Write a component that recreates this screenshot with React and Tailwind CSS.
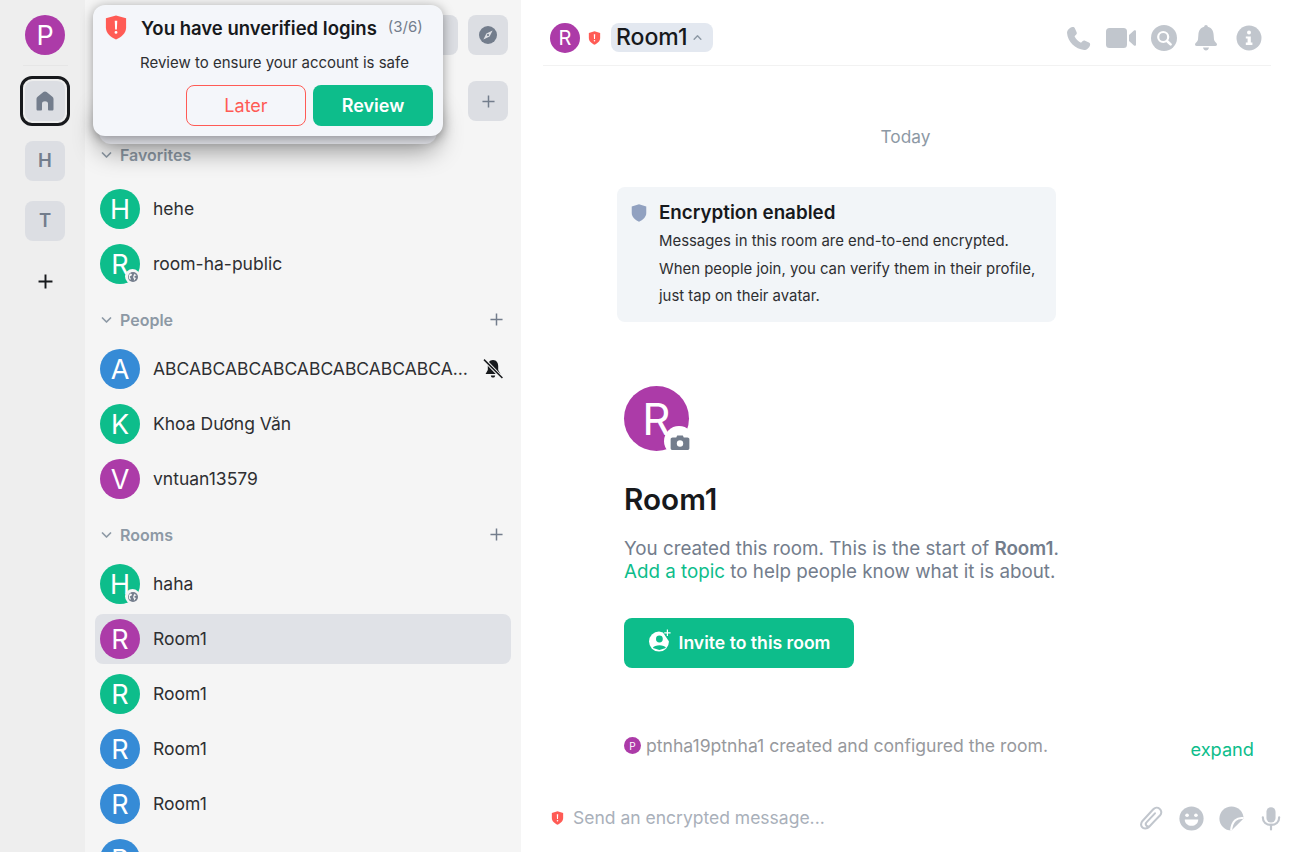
import React from "react";

const PURPLE = "bg-[#ac3ba8]", GREEN = "bg-[#0dbd8b]", BLUE = "bg-[#368bd6]";

function Shield({ className, color = "#ff5b55", mark = true }) {
  return (
    <svg viewBox="0 0 22 26" className={className}>
      <path d="M11 0.5 L21.5 3.5 V13 C21.5 19 16.5 23 11 25.5 C5.5 23 0.5 19 0.5 13 V3.5 Z" fill={color} />
      {mark && <path d="M9.7 6 h2.6 l-.4 9 h-1.8 z M11 16.6 a1.5 1.5 0 1 1 0 3 a1.5 1.5 0 1 1 0-3z" fill="#fff" />}
    </svg>
  );
}

function Chevron({ className = "" }) {
  return (
    <svg viewBox="0 0 10 6" className={className} fill="none" stroke="#8d99a5" strokeWidth="1.7" strokeLinecap="round" strokeLinejoin="round">
      <path d="M1 1 L5 5 L9 1" />
    </svg>
  );
}

function Plus({ className = "", color = "#737d8c", w = 1.6 }) {
  return (
    <svg viewBox="0 0 14 14" className={className} fill="none" stroke={color} strokeWidth={w}>
      <path d="M7 .5 V13.5 M.5 7 H13.5" />
    </svg>
  );
}

function Globe() {
  return (
    <span className="absolute right-0 bottom-0 flex h-[15px] w-[15px] items-center justify-center rounded-full bg-[#f5f5f5] pl-px">
      <svg viewBox="0 0 12 12" className="h-[10px] w-[10px]">
        <circle cx="6" cy="6" r="6" fill="#737d8c" />
        <path d="M2.6 1.8 C4.4 2.2 5.4 3 4.8 3.9 C4 4.6 2.4 4.6 2.2 5.8 C2.2 6.8 3.2 7.2 3.4 8.4 L2.6 9.6 L1 7.6 L1 4 Z M7.6 1.4 C7.4 2.4 8.2 2.8 9 3 L10.4 3.8 C9.4 4.4 8.2 4.6 7.6 5.4 C7.2 6.6 8.6 7 9.6 7.2 C9 8.6 8 9.8 7 10.4 L7.2 8.4 C6.8 7.6 6 7 6.2 6 Z" fill="#f5f5f5" />
      </svg>
    </span>
  );
}

function Avatar({ letter, color, globe }) {
  return (
    <div className={`relative flex h-10 w-10 shrink-0 items-center justify-center rounded-full text-[27px] leading-none text-white ${color}`}>
      {letter}
      {globe && <Globe />}
    </div>
  );
}

function Row({ letter, color, name, globe, selected, muted }) {
  return (
    <div className={`flex h-[50px] items-center rounded-lg pl-[5px] pr-[7px] mb-[5px] ${selected ? "bg-[#e0e2e7]" : ""}`}>
      <Avatar letter={letter} color={color} globe={globe} />
      <span className="ml-[13px] min-w-0 flex-1 truncate text-[17.5px] text-[#2e2f32]">{name}</span>
      {muted && (
        <svg viewBox="0 0 22 22" className="ml-[14px] h-[22px] w-[22px] shrink-0">
          <path d="M11 2 C7.5 2 5.8 5 5.8 8 V12 L3.6 16 H18.4 L16.2 12 V8 C16.2 5 14.5 2 11 2 Z M8.8 17.4 H13.2 C13 19 12 19.6 11 19.6 C10 19.6 9 19 8.8 17.4 Z" fill="#17191c" />
          <path d="M2.6 2 L20 20" stroke="#f5f5f5" strokeWidth="3.4" />
          <path d="M2 1.6 L20.4 20" stroke="#17191c" strokeWidth="1.5" />
        </svg>
      )}
    </div>
  );
}

function Section({ label, add, children, mt, inner }) {
  return (
    <div className={mt}>
      <div className="flex h-6 items-center pl-[6px] pr-[8px]">
        <Chevron className="h-[6px] w-[11px]" />
        <span className="ml-[8px] flex-1 text-[16px] font-semibold text-[#8d99a5]">{label}</span>
        {add && <Plus className="mb-[2px] h-[13px] w-[13px]" />}
      </div>
      <div className={inner}>{children}</div>
    </div>
  );
}

function Rail() {
  return (
    <aside className="flex w-[85px] shrink-0 flex-col items-center bg-[#eeeeee] pl-[5px] pt-[15px]">
      <div className={`flex h-10 w-10 items-center justify-center rounded-full text-[27px] leading-none text-white ${PURPLE}`}>P</div>
      <div className="mt-[10px] h-px w-[45px] bg-[#e6e6e6]" />
      <div className="mt-[10px] flex h-[50px] w-[50px] items-center justify-center rounded-[12px] border-[3px] border-[#17191c]">
        <div className="flex h-10 w-10 items-center justify-center rounded-lg bg-[#dcdee3]">
          <svg viewBox="0 0 18 20" className="h-[20px] w-[18px]">
            <path d="M7.4 1 C8.4 .2 9.6 .2 10.6 1 L16.4 5.8 C17.2 6.5 17.5 7.2 17.5 8 V18 C17.5 19 17 19.5 16 19.5 H13.2 C12.4 19.5 12 19 12 18.5 V12.5 C12 9.6 6 9.6 6 12.5 V18.5 C6 19 5.6 19.5 4.8 19.5 H2 C1 19.5 .5 19 .5 18 V8 C.5 7.2 .8 6.5 1.6 5.8 Z" fill="#737d8c" />
          </svg>
        </div>
      </div>
      <div className="mt-[15px] flex h-10 w-10 items-center justify-center rounded-lg bg-[#dcdee3] text-[18.5px] font-semibold text-[#737d8c]">H</div>
      <div className="mt-5 flex h-10 w-10 items-center justify-center rounded-lg bg-[#dcdee3] text-[18.5px] font-semibold text-[#737d8c]">T</div>
      <Plus className="mt-[33px] h-[15px] w-[15px]" color="#17191c" w={1.8} />
    </aside>
  );
}

function RoomList() {
  return (
    <aside className="flex w-[436px] shrink-0 flex-col overflow-hidden bg-[#f5f5f5] pl-[10px] pr-[10px] pt-[15px]">
      <div className="flex justify-end gap-[10px] pr-[3px]">
        <div className="h-10 w-10 rounded-lg bg-[#dcdee3]" />
        <div className="flex h-10 w-10 items-center justify-center rounded-lg bg-[#dcdee3]">
          <svg viewBox="0 0 18 18" className="h-[18px] w-[18px]">
            <circle cx="9" cy="9" r="9" fill="#737d8c" />
            <path d="M13.6 4.4 L10.6 10.6 L4.4 13.6 L7.4 7.4 Z" fill="#dcdee3" />
            <circle cx="9" cy="9" r="1.1" fill="#737d8c" />
          </svg>
        </div>
      </div>
      <div className="mt-[10px] ml-[5px] mr-[3px] h-px bg-[#e6e6e6]" />
      <div className="mt-[16px] flex justify-end pr-[3px]">
        <div className="flex h-10 w-10 items-center justify-center rounded-lg bg-[#dcdee3]">
          <Plus className="h-[13px] w-[13px]" />
        </div>
      </div>
      <Section label="Favorites" mt="mt-[22px]" inner="mt-[17px]">
        <Row letter="H" color={GREEN} name="hehe" />
        <Row letter="R" color={GREEN} name="room-ha-public" globe />
      </Section>
      <Section label="People" add mt="mt-[14px]" inner="mt-[12px]">
        <Row letter="A" color={BLUE} name="ABCABCABCABCABCABCABCABCABCABCABCABC" muted />
        <Row letter="K" color={GREEN} name="Khoa Dương Văn" />
        <Row letter="V" color={PURPLE} name="vntuan13579" />
      </Section>
      <Section label="Rooms" add mt="mt-[14px]" inner="mt-[12px]">
        <Row letter="H" color={GREEN} name="haha" globe />
        <Row letter="R" color={PURPLE} name="Room1" selected />
        <Row letter="R" color={GREEN} name="Room1" />
        <Row letter="R" color={BLUE} name="Room1" />
        <Row letter="R" color={BLUE} name="Room1" />
        <Row letter="R" color={BLUE} name="Room1" />
      </Section>
    </aside>
  );
}

function Toast() {
  return (
    <div className="absolute left-[93px] top-[5px] w-[350px]">
      <div className="absolute left-[6px] top-[100px] h-[39px] w-[338px] rounded-xl bg-[#dcdde3] shadow-[0_6px_26px_rgba(0,0,0,0.42)]" />
      <div className="relative h-[131px] rounded-xl bg-[#f4f6fa] px-[10px] pt-[12px] shadow-[0_2px_12px_rgba(0,0,0,0.38)]">
        <div className="flex h-[21px] items-center">
          <Shield className="ml-[2px] h-[25px] w-[22px]" />
          <span className="ml-[14px] text-[18.5px] font-semibold leading-[22px] text-[#17191c]">You have unverified logins</span>
          <span className="ml-[11px] text-[15px] text-[#737d8c]">(3/6)</span>
        </div>
        <div className="ml-[37px] mt-[15px] text-[15px] leading-[20px] text-[#2e2f32]">Review to ensure your account is safe</div>
        <div className="mt-[12px] flex justify-end gap-[7px]">
          <div className="flex h-[41px] w-[120px] items-center justify-center rounded-lg border border-[#ff5b55] text-[18px] text-[#ff5b55]">Later</div>
          <div className="flex h-[41px] w-[120px] items-center justify-center rounded-lg bg-[#0dbd8b] text-[18px] font-semibold text-white">Review</div>
        </div>
      </div>
    </div>
  );
}

function HeaderIcons() {
  return (
    <div className="flex items-center">
      <svg viewBox="0 0 24 24" className="h-[25px] w-[25px]" fill="#c1c6cd">
        <path d="M6.2 1 C7.2 .7 8 1.2 8.5 2.2 L10.2 6 C10.6 7 10.3 7.8 9.6 8.5 L8.2 9.8 C9.4 12.6 11.6 14.8 14.4 16 L15.8 14.6 C16.5 13.9 17.4 13.7 18.3 14.1 L22 15.8 C23 16.3 23.4 17.2 23.1 18.2 C22.5 21 20 23 17.4 23 C9 22.4 1.6 15 1 6.8 C1 4.2 3.3 1.6 6.2 1 Z" />
      </svg>
      <svg viewBox="0 0 30 22" className="ml-[15px] h-[22px] w-[30px]" fill="#c1c6cd">
        <rect x="0" y="1" width="21" height="20" rx="3.5" />
        <path d="M23 8 L28 3.6 C29 3 30 3.5 30 4.6 V17.4 C30 18.5 29 19 28 18.4 L23 14 Z" />
      </svg>
      <svg viewBox="0 0 26 26" className="ml-[15px] h-[26px] w-[26px]">
        <circle cx="13" cy="13" r="13" fill="#c1c6cd" />
        <circle cx="12.2" cy="12" r="5" fill="none" stroke="#fff" strokeWidth="2.2" />
        <path d="M16 16 L19.6 19.4" stroke="#fff" strokeWidth="2.6" strokeLinecap="round" />
      </svg>
      <svg viewBox="0 0 24 26" className="ml-[17px] h-[26px] w-[24px]" fill="#c1c6cd">
        <path d="M12 0 C13 0 13.8 .8 13.8 1.8 C17.4 2.6 19.4 5.6 19.6 9.4 L20 14.6 C20.2 16.6 23 18 23 19.6 C23 20.6 22.4 21 21.4 21 H2.6 C1.6 21 1 20.6 1 19.6 C1 18 3.8 16.6 4 14.6 L4.4 9.4 C4.6 5.6 6.6 2.6 10.2 1.8 C10.2 .8 11 0 12 0 Z M9 22.6 H15 C14.6 24.4 13.4 25.6 12 25.6 C10.6 25.6 9.4 24.4 9 22.6 Z" />
      </svg>
      <svg viewBox="0 0 26 26" className="ml-[18px] h-[26px] w-[26px]">
        <circle cx="13" cy="13" r="12.5" fill="#c1c6cd" />
        <circle cx="13" cy="7.6" r="2" fill="#fff" />
        <path d="M9.8 11.4 H14.8 V17.6 H16.4 V20 H9.8 V17.6 H11.6 V13.6 H9.8 Z" fill="#fff" />
      </svg>
    </div>
  );
}

function Composer() {
  return (
    <div className="flex h-[70px] shrink-0 items-center pl-[30px] pr-[14px] pt-[2px]">
      <Shield className="h-[14px] w-[13px]" />
      <span className="ml-[9px] flex-1 text-[17.5px] text-[#a9b0ba]">Send an encrypted message...</span>
      <svg viewBox="0 0 24 26" className="h-[25px] w-[23px]" fill="none" stroke="#c1c6cd" strokeWidth="2.1" strokeLinecap="round">
        <path d="M19.5 11 L9.6 21.6 C7.4 24 3.6 24 2.2 22 C.6 20 1 17.6 2.6 15.6 L13.6 3.6 C15.4 1.6 18.4 1.2 20.4 2.8 C22.6 4.6 22.8 7.6 21 9.6 L10.6 20.4 C9.4 21.6 7.8 21.6 6.8 20.6 C5.8 19.6 5.8 18 7 16.8 L15.6 7.6" />
      </svg>
      <svg viewBox="0 0 26 26" className="ml-[16px] h-[25px] w-[25px]">
        <circle cx="13" cy="13" r="12.6" fill="#c1c6cd" />
        <circle cx="8.4" cy="9.6" r="1.9" fill="#fff" />
        <circle cx="17.6" cy="9.6" r="1.9" fill="#fff" />
        <path d="M6 14 H20 C20 18 17 20.6 13 20.6 C9 20.6 6 18 6 14 Z" fill="#fff" />
      </svg>
      <svg viewBox="0 0 26 26" className="ml-[15px] h-[25px] w-[25px]">
        <path d="M13 .4 C20 .4 25.6 6 25.6 13 L13 25.6 C6 25.6 .4 20 .4 13 C.4 6 6 .4 13 .4 Z" fill="#c1c6cd" />
        <path d="M25.6 12.6 C19 11.6 13.4 15 12.6 25.6" fill="none" stroke="#fff" strokeWidth="2.2" />
      </svg>
      <svg viewBox="0 0 22 26" className="ml-[17px] h-[25px] w-[20px]">
        <rect x="6" y="0.5" width="10" height="17" rx="5" fill="#c1c6cd" />
        <path d="M2 11.6 C2 17 5.8 20 11 20 C16.2 20 20 17 20 11.6" fill="none" stroke="#c1c6cd" strokeWidth="2.4" strokeLinecap="round" />
        <path d="M11 20 V25" stroke="#c1c6cd" strokeWidth="2.4" strokeLinecap="round" />
      </svg>
    </div>
  );
}

function Main() {
  return (
    <main className="flex min-w-0 flex-1 flex-col bg-white">
      <header className="ml-[22px] mr-[24px] flex h-[66px] shrink-0 items-center border-b border-[#f2f2f2] pt-[11px] pl-[7px] pr-[9px]">
        <div className={`flex h-[30px] w-[30px] items-center justify-center rounded-full text-[20px] leading-none text-white ${PURPLE}`}>R</div>
        <Shield className="ml-[8px] h-[14px] w-[13px]" />
        <div className="mb-px ml-[10px] flex h-[29px] items-center rounded-lg bg-[#e3e8f0] pl-[5px] pr-[11px]">
          <span className="text-[23px] font-medium text-[#17191c]">Room1</span>
          <Chevron className="ml-[6px] h-[5px] w-[9px] rotate-180" />
        </div>
        <div className="flex-1" />
        <HeaderIcons />
      </header>
      <div className="flex min-h-0 flex-1 flex-col">
        <div className="mt-[60px] ml-[-5px] text-center text-[17.3px] leading-[22px] text-[#8d99a5]">Today</div>
        <section className="ml-[96px] mt-[39px] h-[135px] w-[439px] rounded-lg bg-[#f2f5f8] pl-[14px] pt-[14px]">
          <div className="flex items-center">
            <Shield className="h-[18px] w-[16px]" color="#91a1c0" mark={false} />
            <span className="ml-[12px] text-[18.8px] font-semibold leading-[24px] text-[#17191c]">Encryption enabled</span>
          </div>
          <div className="ml-[28px] mt-[3px] text-[14.9px] leading-[27.5px] text-[#2e2f32]">
            <div>Messages in this room are end-to-end encrypted.</div>
            <div>When people join, you can verify them in their profile,</div>
            <div>just tap on their avatar.</div>
          </div>
        </section>
        <section className="ml-[103px] mt-[64px]">
          <div className="relative flex h-[65px] w-[65px] items-center justify-center rounded-full bg-[#ac3ba8] text-[44px] leading-none text-white">
            R
            <span className="absolute left-[40px] top-[40px] flex h-[30px] w-[30px] items-center justify-center rounded-full bg-white pl-[2px] pt-[3px]">
              <svg viewBox="0 0 20 16" className="h-[15px] w-[20px]">
                <path d="M2 2.6 H6 L7 .4 H13 L14 2.6 H18 C19 2.6 20 3.4 20 4.6 V14 C20 15 19 16 18 16 H2 C1 16 0 15 0 14 V4.6 C0 3.4 1 2.6 2 2.6 Z" fill="#737d8c" />
                <circle cx="10" cy="9" r="3.4" fill="#fff" />
              </svg>
            </span>
          </div>
          <h1 className="mt-[30px] text-[29.7px] font-semibold leading-[36px] text-[#17191c]">Room1</h1>
          <p className="mt-[20px] text-[18.8px] leading-[23px] text-[#737d8c]">
            You created this room. This is the start of <b className="font-semibold">Room1</b>.<br />
            <span className="text-[#0dbd8b]">Add a topic</span> to help people know what it is about.
          </p>
          <div className="mt-[35px] flex h-[50px] w-[230px] items-center justify-center rounded-lg bg-[#0dbd8b] text-white">
            <svg viewBox="0 0 24 24" className="mt-[-4px] h-[24px] w-[24px]">
              <path d="M11 2.6 A10 10 0 1 0 21 12.6 L18 8 L15 3.6 Z" fill="#fff" />
              <circle cx="11.4" cy="10" r="3.4" fill="#0dbd8b" />
              <path d="M4.8 19 C6.4 15.4 16.6 15.4 18 19 L11.4 21 Z" fill="#0dbd8b" />
              <path d="M19.4 .6 V7 M16.2 3.8 H22.6" stroke="#fff" strokeWidth="1.2" />
            </svg>
            <span className="ml-[7px] text-[17.6px] font-semibold">Invite to this room</span>
          </div>
        </section>
        <div className="mt-[66px] flex items-start pl-[103px] pr-[41px]">
          <div className={`mt-[3px] flex h-[17px] w-[17px] items-center justify-center rounded-full text-[10px] leading-none text-white ${PURPLE}`}>P</div>
          <span className="ml-[5px] flex-1 text-[17.6px] leading-[24px] text-[#97999d]">ptnha19ptnha1 created and configured the room.</span>
          <span className="mt-[3px] text-[18.2px] leading-[24px] text-[#0dbd8b]">expand</span>
        </div>
      </div>
      <Composer />
    </main>
  );
}

export default function App() {
  return (
    <div className="relative flex h-[852px] w-[1295px] overflow-hidden font-['Inter',sans-serif]">
      <Rail />
      <RoomList />
      <Main />
      <Toast />
    </div>
  );
}
